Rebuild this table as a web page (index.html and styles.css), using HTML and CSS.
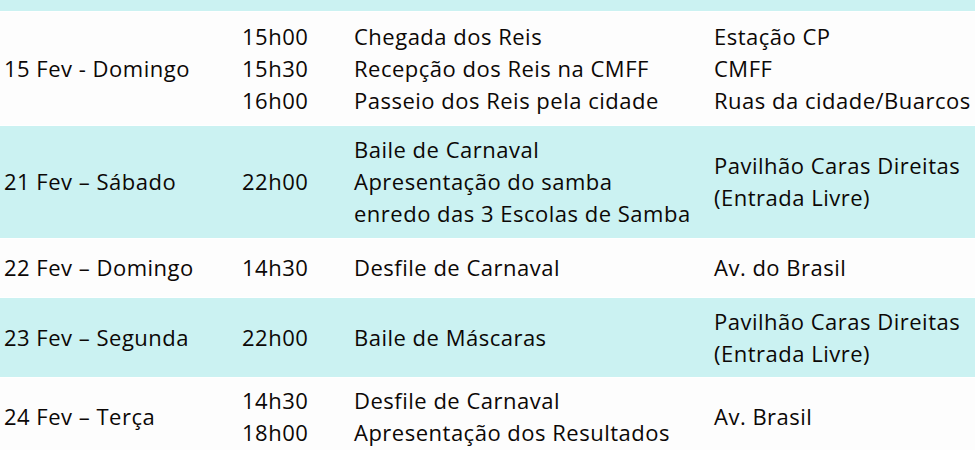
FILE: index.html
```html
<!DOCTYPE html>
<html lang="pt">
<head>
<meta charset="utf-8">
<title>Programa do Carnaval</title>
<link rel="stylesheet" href="styles.css">
</head>
<body>
<table class="programa">
  <colgroup>
    <col class="c-dia">
    <col class="c-hora">
    <col class="c-evento">
    <col class="c-local">
  </colgroup>
  <tbody>
    <tr class="cyan top"><td></td><td></td><td></td><td></td></tr>
    <tr class="white r1">
      <td>15 Fev - Domingo</td>
      <td>15h00<br>15h30<br>16h00</td>
      <td>Chegada dos Reis<br>Recepção dos Reis na CMFF<br>Passeio dos Reis pela cidade</td>
      <td>Estação CP<br>CMFF<br>Ruas da cidade/Buarcos</td>
    </tr>
    <tr class="cyan r2">
      <td>21 Fev – Sábado</td>
      <td>22h00</td>
      <td>Baile de Carnaval<br>Apresentação do samba<br>enredo das 3 Escolas de Samba</td>
      <td>Pavilhão Caras Direitas<br>(Entrada Livre)</td>
    </tr>
    <tr class="white r3">
      <td>22 Fev – Domingo</td>
      <td>14h30</td>
      <td>Desfile de Carnaval</td>
      <td>Av. do Brasil</td>
    </tr>
    <tr class="cyan r4">
      <td>23 Fev – Segunda</td>
      <td>22h00</td>
      <td>Baile de Máscaras</td>
      <td>Pavilhão Caras Direitas<br>(Entrada Livre)</td>
    </tr>
    <tr class="white r5">
      <td>24 Fev – Terça</td>
      <td>14h30<br>18h00</td>
      <td>Desfile de Carnaval<br>Apresentação dos Resultados</td>
      <td>Av. Brasil</td>
    </tr>
  </tbody>
</table>
</body>
</html>
```
FILE: styles.css
```css
html, body {
  margin: 0;
  padding: 0;
  background: #fdfdfd;
}
body {
  overflow: hidden;
  font-family: "Open Sans", "Liberation Sans", Arial, sans-serif;
  font-size: 22px;
  letter-spacing: 0.5px;
  color: #0c0806;
}
.programa {
  width: 975px;
  border-collapse: collapse;
  table-layout: fixed;
}
.c-dia { width: 238px; }
.c-hora { width: 112px; }
.c-evento { width: 360px; }
.c-local { width: 265px; }
.programa td {
  padding: 0 0 2px 4px;
  line-height: 32px;
  vertical-align: middle;
  white-space: nowrap;
  overflow: visible;
}
.cyan { background: #cbf2f2; }
.white { background: #fdfdfd; }
.top td { height: 11px; padding: 0; line-height: 0; }
.r1 { height: 114px; }
.r2 { height: 113px; }
.r3 { height: 59px; }
.r4 { height: 80px; }
.r5 { height: 78px; }
.programa tr + tr td { border-top: 1px solid #ffffff; }
```
